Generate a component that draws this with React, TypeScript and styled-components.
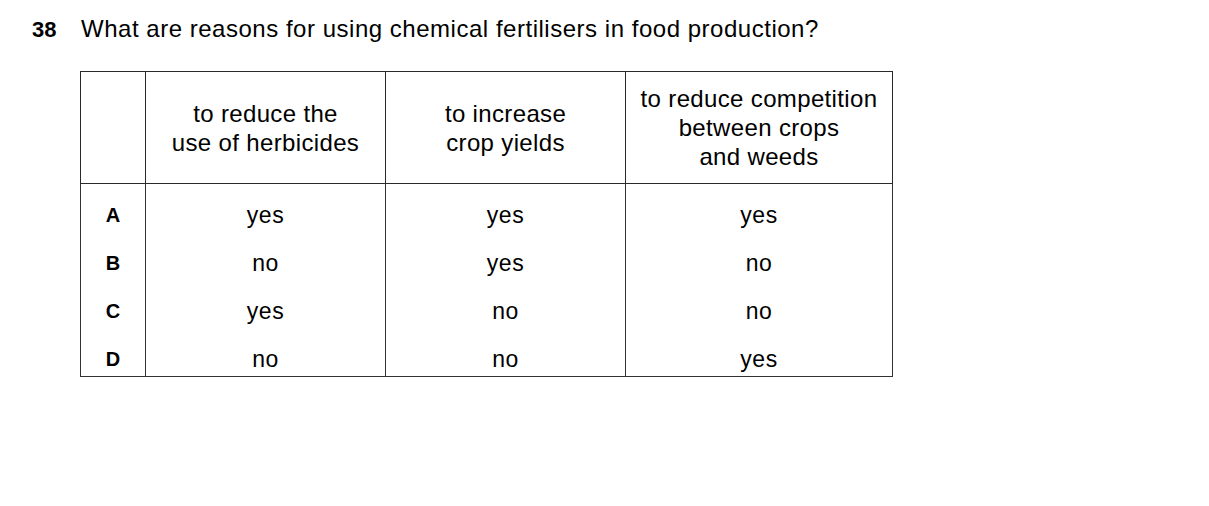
import React from "react";
import styled, { createGlobalStyle } from "styled-components";

const GlobalStyle = createGlobalStyle`
  html, body { margin: 0; padding: 0; background: #ffffff; }
  body { font-family: "Liberation Sans", Arial, sans-serif; color: #000; }
`;

const Page = styled.div`
  padding: 15px 0 0 32px;
`;

const Question = styled.div`
  display: flex;
  align-items: baseline;
  font-size: 24px;
  line-height: 28px;
  letter-spacing: 0.52px;
`;

const QNumber = styled.span`
  font-weight: bold;
  font-size: 22px;
  letter-spacing: 0;
  width: 49px;
`;

const Table = styled.table`
  margin: 27px 0 0 48px;
  border-collapse: collapse;
  table-layout: fixed;
  width: 812px;
`;

const Col = styled.col<{ $w: number }>`
  width: ${(p) => p.$w}px;
`;

const HeadCell = styled.th`
  border: 1px solid #2a2a2a;
  height: 111px;
  padding: 0;
  font-weight: normal;
  font-size: 24px;
  letter-spacing: 0.35px;
  line-height: 29px;
  text-align: center;
  vertical-align: middle;
`;

const Cell = styled.td<{ $first?: boolean; $last?: boolean; $label?: boolean }>`
  border-left: 1px solid #333;
  border-right: 1px solid #333;
  ${(p) => (p.$last ? "border-bottom: 1px solid #333;" : "")}
  padding: ${(p) => (p.$first ? "17px" : "10px")} 0 ${(p) => (p.$last ? "3px" : "10px")};
  text-align: center;
  font-size: ${(p) => (p.$label ? "20px" : "23px")};
  font-weight: ${(p) => (p.$label ? "bold" : "normal")};
  letter-spacing: ${(p) => (p.$label ? "0" : "0.5px")};
  line-height: 28px;
`;

const headers = [
  ["to reduce the", "use of herbicides"],
  ["to increase", "crop yields"],
  ["to reduce competition", "between crops", "and weeds"],
];

const widths = [65, 240, 240, 267];

const rows: [string, string, string, string][] = [
  ["A", "yes", "yes", "yes"],
  ["B", "no", "yes", "no"],
  ["C", "yes", "no", "no"],
  ["D", "no", "no", "yes"],
];

export default function App() {
  return (
    <>
      <GlobalStyle />
      <Page>
        <Question>
          <QNumber>38</QNumber>
          <span>What are reasons for using chemical fertilisers in food production?</span>
        </Question>
        <Table>
          <colgroup>
            {widths.map((w, i) => (
              <Col key={i} $w={w} />
            ))}
          </colgroup>
          <thead>
            <tr>
              <HeadCell />
              {headers.map((h, i) => (
                <HeadCell key={i}>
                  {h.map((line, j) => (
                    <div key={j}>{line}</div>
                  ))}
                </HeadCell>
              ))}
            </tr>
          </thead>
          <tbody>
            {rows.map((r, i) => (
              <tr key={r[0]}>
                {r.map((v, j) => (
                  <Cell key={j} $label={j === 0} $first={i === 0} $last={i === rows.length - 1}>
                    {v}
                  </Cell>
                ))}
              </tr>
            ))}
          </tbody>
        </Table>
      </Page>
    </>
  );
}
